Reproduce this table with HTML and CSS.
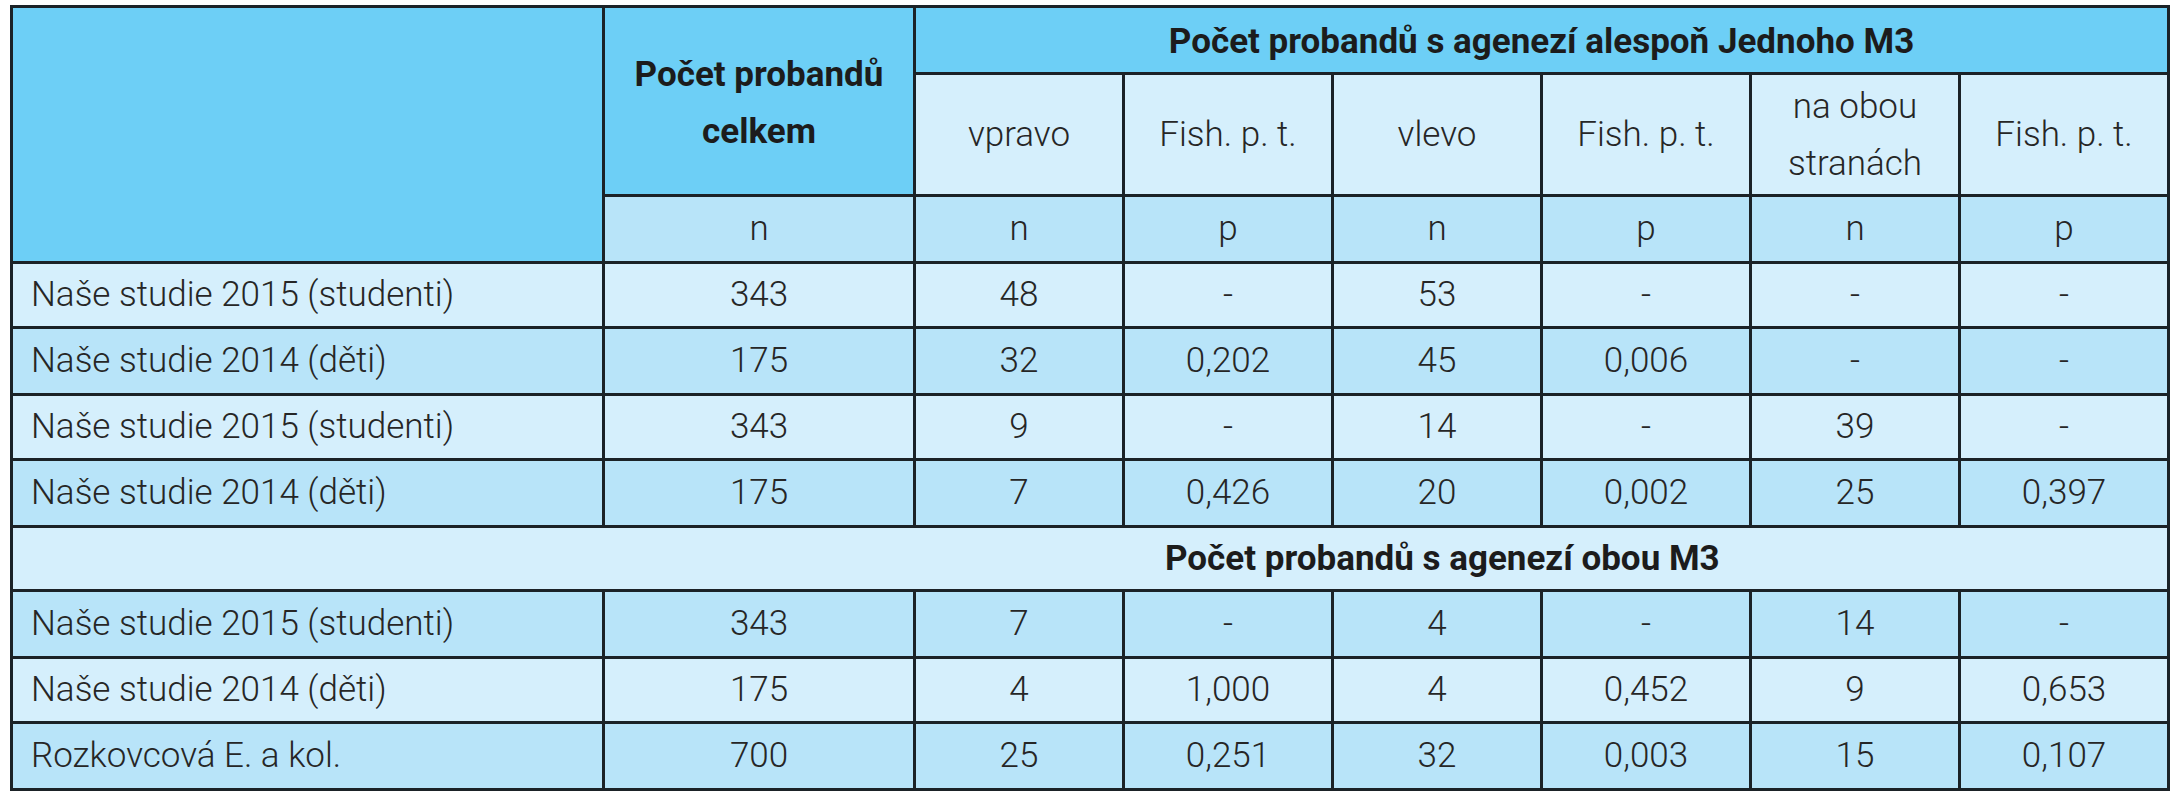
FILE: index.html
```html
<!DOCTYPE html>
<html lang="cs">
<head>
<meta charset="utf-8">
<title>Počet probandů s agenezí M3</title>
<link rel="stylesheet" href="styles.css">
</head>
<body>
<table class="tbl">
  <colgroup>
    <col class="c-name">
    <col class="c-total">
    <col class="c-val"><col class="c-val"><col class="c-val"><col class="c-val"><col class="c-val"><col class="c-val">
  </colgroup>
  <thead>
    <tr class="h1">
      <th class="dark" rowspan="3"></th>
      <th class="dark bold two" rowspan="2">Počet probandů<br>celkem</th>
      <th class="dark bold" colspan="6">Počet probandů s agenezí alespoň Jednoho M3</th>
    </tr>
    <tr class="h2">
      <th class="light">vpravo</th>
      <th class="light">Fish. p. t.</th>
      <th class="light">vlevo</th>
      <th class="light">Fish. p. t.</th>
      <th class="light two">na obou<br>stranách</th>
      <th class="light">Fish. p. t.</th>
    </tr>
    <tr class="h3">
      <th class="mid">n</th>
      <th class="mid">n</th>
      <th class="mid">p</th>
      <th class="mid">n</th>
      <th class="mid">p</th>
      <th class="mid">n</th>
      <th class="mid">p</th>
    </tr>
  </thead>
  <tbody>
    <tr class="light r-a"><td class="name">Naše studie 2015 (studenti)</td><td>343</td><td>48</td><td>-</td><td>53</td><td>-</td><td>-</td><td>-</td></tr>
    <tr class="mid r-b"><td class="name">Naše studie 2014 (děti)</td><td>175</td><td>32</td><td>0,202</td><td>45</td><td>0,006</td><td>-</td><td>-</td></tr>
    <tr class="light r-a"><td class="name">Naše studie 2015 (studenti)</td><td>343</td><td>9</td><td>-</td><td>14</td><td>-</td><td>39</td><td>-</td></tr>
    <tr class="mid r-b"><td class="name">Naše studie 2014 (děti)</td><td>175</td><td>7</td><td>0,426</td><td>20</td><td>0,002</td><td>25</td><td>0,397</td></tr>
    <tr class="light r-sub"><td class="sub" colspan="8"><span class="sub-text">Počet probandů s agenezí obou M3</span></td></tr>
    <tr class="mid r-b"><td class="name">Naše studie 2015 (studenti)</td><td>343</td><td>7</td><td>-</td><td>4</td><td>-</td><td>14</td><td>-</td></tr>
    <tr class="light r-a"><td class="name">Naše studie 2014 (děti)</td><td>175</td><td>4</td><td>1,000</td><td>4</td><td>0,452</td><td>9</td><td>0,653</td></tr>
    <tr class="mid r-b"><td class="name">Rozkovcová E. a kol.</td><td>700</td><td>25</td><td>0,251</td><td>32</td><td>0,003</td><td>15</td><td>0,107</td></tr>
  </tbody>
</table>
</body>
</html>
```

FILE: styles.css
```css
html, body {
  margin: 0;
  padding: 0;
  background: #ffffff;
}

body {
  font-family: Roboto, "Liberation Sans", Arial, sans-serif;
  color: #262626;
}

.tbl {
  margin: 5px 0 0 10px;
  width: 2155px;
  table-layout: fixed;
  border-collapse: collapse;
  border: 3px solid #1b2227;
}

.c-name { width: 592px; }
.c-total { width: 311px; }
.c-val { width: 209px; }

.tbl th,
.tbl td {
  border: 3px solid #1b2227;
  padding: 0;
  text-align: center;
  vertical-align: middle;
  font-size: 35px;
  font-weight: 300;
  line-height: 40px;
}

.tbl th.bold {
  font-weight: 700;
  color: #1c1c1c;
}

.tbl .two {
  line-height: 57px;
}

.dark { background: #6dcff6; }
.light { background: #d5effc; }
.mid { background: #b8e4f9; }

.h1 { height: 67px; }
.h2 { height: 122px; }
.h3 { height: 67px; }
.r-a { height: 65px; }
.r-b { height: 67px; }
.r-sub { height: 64px; }

.h1 th.bold {
  padding-top: 3px;
}

.tbl td.name {
  text-align: left;
  padding-left: 18px;
}

.tbl td.sub {
  text-align: left;
  padding-left: 1152px;
}

.sub-text {
  font-weight: 700;
  color: #1c1c1c;
}
```
